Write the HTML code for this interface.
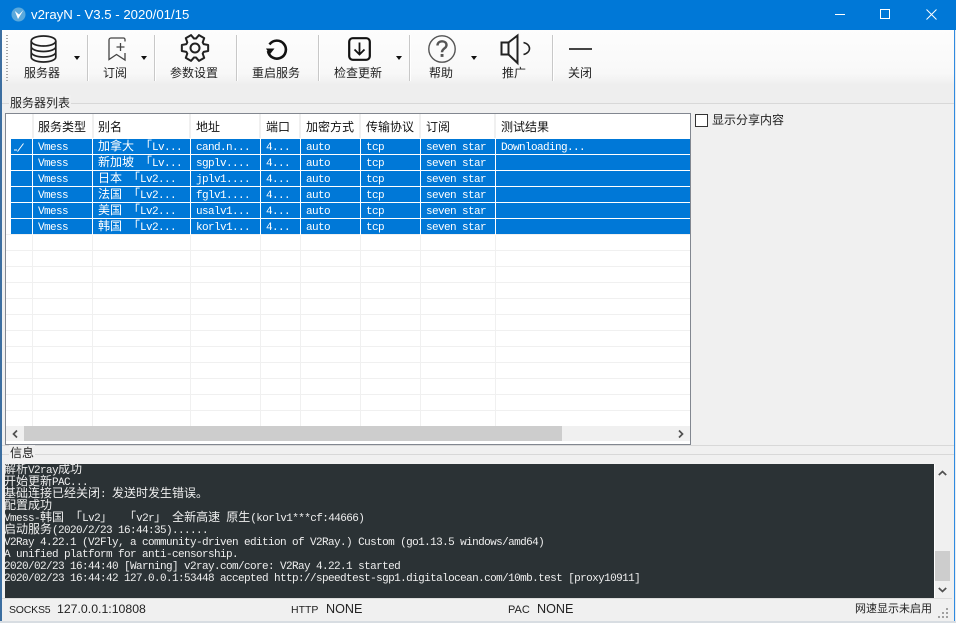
<!DOCTYPE html>
<html lang="zh"><head><meta charset="utf-8"><title>v2rayN</title>
<style>
html,body{margin:0;padding:0;width:956px;height:623px;overflow:hidden;background:#fff}
body{position:relative;font-family:"Liberation Sans","Noto Sans CJK SC",sans-serif;font-size:12px;color:#111}
div,span.a,svg{position:absolute}
svg{overflow:visible}
.t{white-space:pre;line-height:16px}
.lbl{top:65px;width:80px;text-align:center;font-size:12px;line-height:16px;color:#222;white-space:pre}
.sep{top:35px;width:1px;height:46px;background:#c8c8c8;box-shadow:1px 0 0 #fff}
.arr{width:0;height:0;border-left:3.5px solid transparent;border-right:3.5px solid transparent;border-top:4px solid #111;top:56px}
.h{top:119px;font-size:12px;line-height:16px;color:#111;white-space:pre}
.vl{top:114px;width:2px;height:24px;background:#f0f0f0}
.gl{top:139px;width:1px;height:287px;background:#f0f0f0}
.hl{left:6px;width:684px;height:1px;background:#f0f0f0}
.row{left:11px;width:679px;height:15px;background:#0078d7}
.rv{width:1px;height:16px;background:#fff}
.c{color:#fff;font-family:"Liberation Mono","Noto Sans CJK SC",monospace;font-size:11px;letter-spacing:-.6px;line-height:15px;white-space:pre;margin-top:1px}
.c b,.l b{font-weight:400;font-family:"Noto Sans CJK SC",sans-serif;font-size:12px;letter-spacing:0;line-height:0}
.l{left:-1px;margin-top:1px;color:#eee;font-family:"Liberation Mono","Noto Sans CJK SC",monospace;font-size:11px;letter-spacing:-.6px;line-height:12px;height:12px;white-space:pre}
.s{top:601px;line-height:16px;font-size:12px;white-space:pre;color:#222}
</style></head><body>
<!-- window frame -->
<div style="left:0;top:0;width:956px;height:30px;background:#0078d7"></div>
<div style="left:0;top:30px;width:2px;height:593px;background:#3c6ea0"></div>
<div style="left:954px;top:30px;width:1px;height:593px;background:#2f8ae0"></div>
<div style="left:955px;top:30px;width:1px;height:593px;background:#e8ecf0"></div>
<div style="left:2px;top:30px;width:952px;height:591px;background:#f0f0f0"></div>
<div style="left:0;top:621px;width:956px;height:2px;background:#d8dde2"></div>

<!-- title bar -->
<svg style="left:11px;top:7px" width="16" height="16" viewBox="0 0 16 16"><circle cx="7.500" cy="7.500" r="7" fill="#5aa9dc"/><path d="M3.800 4L7 12 12.500 3 8 7.500z" fill="#fff"/></svg>
<div class="t" style="left:31px;top:7px;font-size:13.2px;color:#fff">v2rayN - V3.5 - 2020/01/15</div>
<div style="left:835px;top:14px;width:10px;height:1px;background:#fff"></div>
<div style="left:880px;top:9px;width:8px;height:8px;border:1px solid #fff"></div>
<svg style="left:926px;top:9px" width="11" height="11" viewBox="0 0 11 11"><path d="M.5.5l10 10M10.500.5l-10 10" stroke="#fff" stroke-width="1" fill="none"/></svg>

<!-- toolbar -->
<div style="left:2px;top:30px;width:952px;height:73px;background:linear-gradient(#fdfdfd 0,#f8f8f8 60%,#eeeeee 75%,#eeeeee 100%)"></div>
<div style="left:6px;top:35px;width:2px;height:46px;background:repeating-linear-gradient(#a8a8a8 0 1px,transparent 1px 3px)"></div>
<div class="sep" style="left:87px"></div>
<div class="sep" style="left:154px"></div>
<div class="sep" style="left:236px"></div>
<div class="sep" style="left:318px"></div>
<div class="sep" style="left:409px"></div>
<div class="sep" style="left:552px"></div>
<div class="arr" style="left:74px"></div>
<div class="arr" style="left:141px"></div>
<div class="arr" style="left:396px"></div>
<div class="arr" style="left:471px"></div>

<svg style="left:30px;top:35px" width="27" height="28" viewBox="0 0 27 28" fill="none" stroke="#222" stroke-width="1.700"><ellipse cx="13.500" cy="6" rx="12.300" ry="5"/><path d="M1.200 6v16c0 2.800 5.500 5 12.300 5s12.300-2.200 12.300-5V6M1.200 11.500c0 2.800 5.500 5 12.300 5s12.300-2.200 12.300-5M1.200 17c0 2.800 5.500 5 12.300 5s12.300-2.200 12.300-5"/></svg>
<svg style="left:108px;top:37px" width="18" height="24" viewBox="0 0 18 24" fill="none" stroke="#444" stroke-width="1.300"><path d="M17 4.500V2.500a1.500 1.500 0 0 0-1.500-1.500H3a2 2 0 0 0-2 2v19.500L8.500 17.500 17 23v-7"/><path d="M8.500 10h8M12.500 6v8"/></svg>
<svg style="left:181px;top:34px" width="28" height="28" viewBox="0 0 28 28" fill="none" stroke="#222" stroke-width="2" stroke-linejoin="round"><polygon points="22.680,10.140 27.150,10.960 27.150,17.040 22.680,17.860 21.680,19.590 23.210,23.870 17.940,26.910 15,23.450 13,23.450 10.060,26.910 4.790,23.870 6.320,19.590 5.320,17.860 .85,17.040 .85,10.960 5.320,10.140 6.320,8.410 4.790,4.130 10.060,1.090 13,4.550 15,4.550 17.940,1.090 23.210,4.130 21.680,8.410"/><circle cx="14" cy="14" r="4.500"/></svg>
<svg style="left:265px;top:38px" width="23" height="22" viewBox="0 0 23 22" fill="none" stroke="#111" stroke-width="2.600"><path d="M4.500 6.500A9 9 0 1 1 3 13"/><path d="M1 10.500h8.500L4.800 16.500z" fill="#111" stroke="none"/></svg>
<svg style="left:348px;top:37px" width="23" height="24" viewBox="0 0 23 24" fill="none" stroke="#111"><rect x="1.200" y="1.200" width="20.600" height="21.600" rx="3.500" stroke-width="2.200"/><path d="M11.500 5.500v12M6.500 12.500l5 5 5-5" stroke-width="1.800"/></svg>
<svg style="left:428px;top:35px" width="28" height="28" viewBox="0 0 28 28" fill="none"><circle cx="14" cy="14" r="13.200" stroke="#555" stroke-width="1.400"/><path d="M9.500 10.500c0-2.800 2-4.200 4.500-4.200s4.500 1.500 4.500 3.800c0 3.400-4.500 3.400-4.500 7.200" stroke="#555" stroke-width="2.400"/><rect x="12.600" y="19" width="2.900" height="2.900" fill="#555"/></svg>
<svg style="left:500px;top:34px" width="31" height="30" viewBox="0 0 31 30" fill="none" stroke="#222" stroke-width="2"><path d="M1.500 8.500h7v12h-7z"/><path d="M8.500 8.500L17.500 1.500V29l-9-8.500"/><path d="M23.500 8.500c4 1 6 3.500 6 6s-2 5-6 6" stroke-width="1.600"/></svg>
<div style="left:569px;top:48px;width:23px;height:2px;background:#444"></div>

<div class="lbl" style="left:2px">服务器</div>
<div class="lbl" style="left:75px">订阅</div>
<div class="lbl" style="left:154px">参数设置</div>
<div class="lbl" style="left:236px">重启服务</div>
<div class="lbl" style="left:318px">检查更新</div>
<div class="lbl" style="left:401px">帮助</div>
<div class="lbl" style="left:474px">推广</div>
<div class="lbl" style="left:540px">关闭</div>

<!-- server group -->
<div style="left:2px;top:103px;width:952px;height:1px;background:#d8d8d8"></div>
<div class="t" style="left:9px;top:95px;background:#f0f0f0;padding:0 1px;font-size:12px;color:#222">服务器列表</div>

<!-- list -->
<div style="left:5px;top:113px;width:684px;height:330px;border:1px solid #828790;background:#fff"></div>
<div class="vl" style="left:32px"></div><div class="vl" style="left:92px"></div><div class="vl" style="left:189px"></div><div class="vl" style="left:259px"></div><div class="vl" style="left:299px"></div><div class="vl" style="left:359px"></div><div class="vl" style="left:419px"></div><div class="vl" style="left:494px"></div>
<div class="h" style="left:38px">服务类型</div>
<div class="h" style="left:98px">别名</div>
<div class="h" style="left:196px">地址</div>
<div class="h" style="left:266px">端口</div>
<div class="h" style="left:306px">加密方式</div>
<div class="h" style="left:366px">传输协议</div>
<div class="h" style="left:426px">订阅</div>
<div class="h" style="left:501px">测试结果</div>

<div class="gl" style="left:32px"></div><div class="gl" style="left:92px"></div><div class="gl" style="left:190px"></div><div class="gl" style="left:260px"></div><div class="gl" style="left:300px"></div><div class="gl" style="left:360px"></div><div class="gl" style="left:420px"></div><div class="gl" style="left:495px"></div>
<div class="hl" style="top:234px"></div><div class="hl" style="top:250px"></div><div class="hl" style="top:266px"></div><div class="hl" style="top:282px"></div><div class="hl" style="top:298px"></div><div class="hl" style="top:314px"></div><div class="hl" style="top:330px"></div><div class="hl" style="top:346px"></div><div class="hl" style="top:362px"></div><div class="hl" style="top:378px"></div><div class="hl" style="top:394px"></div><div class="hl" style="top:410px"></div>

<div class="row" style="top:139px"></div>
<div class="row" style="top:155px"></div>
<div class="row" style="top:171px"></div>
<div class="row" style="top:187px"></div>
<div class="row" style="top:203px"></div>
<div class="row" style="top:219px"></div>
<div class="rv" style="left:32px;top:139px;height:96px"></div><div class="rv" style="left:92px;top:139px;height:96px"></div><div class="rv" style="left:190px;top:139px;height:96px"></div><div class="rv" style="left:260px;top:139px;height:96px"></div><div class="rv" style="left:300px;top:139px;height:96px"></div><div class="rv" style="left:360px;top:139px;height:96px"></div><div class="rv" style="left:420px;top:139px;height:96px"></div><div class="rv" style="left:495px;top:139px;height:96px"></div>

<svg style="left:14px;top:143px" width="11" height="9" viewBox="0 0 11 9" fill="none" stroke="#fff"><path d="M0 7h3M3.500 8.500L9.500 .5"/></svg>

<div class="c" style="left:38px;top:140px">Vmess</div><div class="c" style="left:98px;top:140px"><b>加拿大</b> <b>「</b>Lv...</div><div class="c" style="left:196px;top:140px">cand.n...</div><div class="c" style="left:266px;top:140px">4...</div><div class="c" style="left:306px;top:140px">auto</div><div class="c" style="left:366px;top:140px">tcp</div><div class="c" style="left:426px;top:140px">seven star</div><div class="c" style="left:501px;top:140px">Downloading...</div>
<div class="c" style="left:38px;top:156px">Vmess</div><div class="c" style="left:98px;top:156px"><b>新加坡</b> <b>「</b>Lv...</div><div class="c" style="left:196px;top:156px">sgplv....</div><div class="c" style="left:266px;top:156px">4...</div><div class="c" style="left:306px;top:156px">auto</div><div class="c" style="left:366px;top:156px">tcp</div><div class="c" style="left:426px;top:156px">seven star</div>
<div class="c" style="left:38px;top:172px">Vmess</div><div class="c" style="left:98px;top:172px"><b>日本</b> <b>「</b>Lv2...</div><div class="c" style="left:196px;top:172px">jplv1....</div><div class="c" style="left:266px;top:172px">4...</div><div class="c" style="left:306px;top:172px">auto</div><div class="c" style="left:366px;top:172px">tcp</div><div class="c" style="left:426px;top:172px">seven star</div>
<div class="c" style="left:38px;top:188px">Vmess</div><div class="c" style="left:98px;top:188px"><b>法国</b> <b>「</b>Lv2...</div><div class="c" style="left:196px;top:188px">fglv1....</div><div class="c" style="left:266px;top:188px">4...</div><div class="c" style="left:306px;top:188px">auto</div><div class="c" style="left:366px;top:188px">tcp</div><div class="c" style="left:426px;top:188px">seven star</div>
<div class="c" style="left:38px;top:204px">Vmess</div><div class="c" style="left:98px;top:204px"><b>美国</b> <b>「</b>Lv2...</div><div class="c" style="left:196px;top:204px">usalv1...</div><div class="c" style="left:266px;top:204px">4...</div><div class="c" style="left:306px;top:204px">auto</div><div class="c" style="left:366px;top:204px">tcp</div><div class="c" style="left:426px;top:204px">seven star</div>
<div class="c" style="left:38px;top:220px">Vmess</div><div class="c" style="left:98px;top:220px"><b>韩国</b> <b>「</b>Lv2...</div><div class="c" style="left:196px;top:220px">korlv1...</div><div class="c" style="left:266px;top:220px">4...</div><div class="c" style="left:306px;top:220px">auto</div><div class="c" style="left:366px;top:220px">tcp</div><div class="c" style="left:426px;top:220px">seven star</div>

<!-- list h-scrollbar -->
<div style="left:6px;top:426px;width:684px;height:15px;background:#f0f0f0"></div>
<div style="left:24px;top:426px;width:538px;height:15px;background:#cdcdcd"></div>
<svg style="left:12px;top:430px" width="6" height="8" viewBox="0 0 6 8" fill="none" stroke="#505050" stroke-width="1.700"><path d="M5 .5L1.500 4 5 7.500"/></svg>
<svg style="left:678px;top:430px" width="6" height="8" viewBox="0 0 6 8" fill="none" stroke="#505050" stroke-width="1.700"><path d="M1 .5L4.500 4 1 7.500"/></svg>

<!-- checkbox -->
<div style="left:695px;top:114px;width:11px;height:11px;border:1px solid #333;background:#fff"></div>
<div class="t" style="left:712px;top:112px;font-size:12px;color:#222">显示分享内容</div>

<!-- info group -->
<div style="left:2px;top:445px;width:952px;height:1px;background:#d8d8d8"></div>
<div style="left:2px;top:454px;width:952px;height:1px;background:#d8d8d8"></div>
<div class="t" style="left:9px;top:445px;background:#f0f0f0;padding:0 1px;font-size:12px;color:#222">信息</div>

<!-- log -->
<div style="left:5px;top:464px;width:929px;height:134px;background:#2b3235;overflow:hidden">
<div class="l" style="top:0"><b>解析</b>V2ray<b>成功</b></div>
<div class="l" style="top:12px"><b>开始更新</b>PAC...</div>
<div class="l" style="top:24px"><b>基础连接已经关闭</b>: <b>发送时发生错误。</b></div>
<div class="l" style="top:36px"><b>配置成功</b></div>
<div class="l" style="top:48px">Vmess-<b>韩国</b> <b>「</b>Lv2<b>」</b>  <b>「</b>v2r<b>」</b> <b>全新高速</b> <b>原生</b>(korlv1***cf:44666)</div>
<div class="l" style="top:60px"><b>启动服务</b>(2020/2/23 16:44:35)......</div>
<div class="l" style="top:72px">V2Ray 4.22.1 (V2Fly, a community-driven edition of V2Ray.) Custom (go1.13.5 windows/amd64)</div>
<div class="l" style="top:84px">A unified platform for anti-censorship.</div>
<div class="l" style="top:96px">2020/02/23 16:44:40 [Warning] v2ray.com/core: V2Ray 4.22.1 started</div>
<div class="l" style="top:108px">2020/02/23 16:44:42 127.0.0.1:53448 accepted http://speedtest-sgp1.digitalocean.com/10mb.test [proxy10911]</div>
</div>
<!-- log scrollbar -->
<div style="left:934px;top:464px;width:16px;height:134px;background:#f0f0f0;border-left:1px solid #fff;box-sizing:border-box"></div>
<div style="left:935px;top:551px;width:15px;height:30px;background:#cdcdcd"></div>
<svg style="left:938px;top:470px" width="9" height="6" viewBox="0 0 9 6" fill="none" stroke="#505050" stroke-width="1.700"><path d="M.8 5L4.500 1.500 8.200 5"/></svg>
<svg style="left:938px;top:587px" width="9" height="6" viewBox="0 0 9 6" fill="none" stroke="#505050" stroke-width="1.700"><path d="M.8 1L4.500 4.500 8.200 1"/></svg>

<!-- status bar -->
<div style="left:2px;top:598px;width:950px;height:1px;background:#dcdcdc"></div>
<div class="s" style="left:9px;font-size:10.500px;letter-spacing:-.2px;top:602px">SOCKS5</div>
<div class="s" style="left:57px;font-size:12.300px">127.0.0.1:10808</div>
<div class="s" style="left:291px;font-size:10.500px;top:602px">HTTP</div>
<div class="s" style="left:326px;font-size:12.600px">NONE</div>
<div class="s" style="left:508px;font-size:11px;top:602px">PAC</div>
<div class="s" style="left:537px;font-size:12.600px">NONE</div>
<div class="s" style="left:855px;font-size:11px">网速显示未启用</div>
<svg style="left:938px;top:608px" width="11" height="11" viewBox="0 0 11 11" fill="#a0a0a0"><rect x="8" y="0" width="2" height="2"/><rect x="4" y="4" width="2" height="2"/><rect x="8" y="4" width="2" height="2"/><rect x="0" y="8" width="2" height="2"/><rect x="4" y="8" width="2" height="2"/><rect x="8" y="8" width="2" height="2"/></svg>
</body></html>
